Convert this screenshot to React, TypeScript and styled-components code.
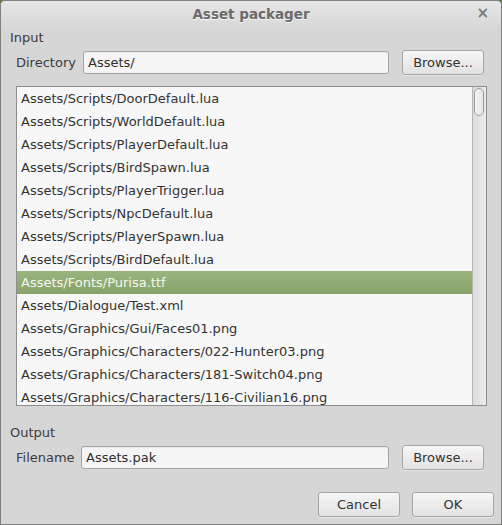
import React from "react";
import styled, { createGlobalStyle } from "styled-components";

const GlobalStyle = createGlobalStyle`
  html, body { margin: 0; padding: 0; background: #5f7a4a; }
  body { font-family: "DejaVu Sans", "Liberation Sans", sans-serif; font-size: 13px; color: #3c3c3c; }
  * { box-sizing: border-box; }
`;

const Window = styled.div`
  width: 502px;
  height: 525px;
  border: 1px solid #7f7f7f;
  border-radius: 5px 5px 0 0;
  background: #d6d6d6;
  display: flex;
  flex-direction: column;
  overflow: hidden;
`;

const TitleBar = styled.div`
  height: 26px;
  flex: none;
  display: flex;
  align-items: center;
  justify-content: center;
  position: relative;
  background: linear-gradient(#e6e6e6, #d8d8d8);
`;

const Title = styled.div`
  font-weight: bold;
  font-size: 13.5px;
  color: #6a6a6a;
  text-shadow: 0 1px 0 #f4f4f4;
`;

const Close = styled.div`
  position: absolute;
  right: 12px;
  top: 4px;
  font-size: 15px;
  font-weight: bold;
  color: #7a7a7a;
  line-height: 17px;
`;

const Body = styled.div`
  flex: 1;
  display: flex;
  flex-direction: column;
  padding: 2px 17px 0 9px;
`;

const SectionLabel = styled.div<{ $top: number }>`
  height: 17px;
  line-height: 17px;
  margin-top: ${(p) => p.$top}px;
  color: #3c3c3c;
`;

const FieldRow = styled.div<{ $top: number }>`
  display: grid;
  grid-template-columns: auto 1fr 82px;
  align-items: center;
  column-gap: 13px;
  height: 25px;
  margin-top: ${(p) => p.$top}px;
  padding-left: 6px;
`;

const FieldLabel = styled.div<{ $w: number }>`
  width: ${(p) => p.$w}px;
  color: #3c3c3c;
`;

const TextBox = styled.div`
  height: 23px;
  border: 1px solid #a4a4a4;
  border-radius: 3px;
  background: #f5f5f5;
  padding: 0 4px;
  line-height: 21px;
  color: #2e2e2e;
  box-shadow: inset 0 1px 1px rgba(0, 0, 0, 0.05);
`;

const Button = styled.div<{ $w?: number }>`
  width: ${(p) => p.$w ?? 82}px;
  height: 25px;
  border: 1px solid #a6a6a6;
  border-radius: 3px;
  background: linear-gradient(#f6f6f6, #e2e2e2);
  display: flex;
  align-items: center;
  justify-content: center;
  color: #333;
  box-shadow: 0 1px 0 rgba(255, 255, 255, 0.4);
`;

const ListBox = styled.div`
  margin-top: 11px;
  margin-left: 6px;
  margin-right: -3px;
  height: 320px;
  border: 1px solid #8e8e8e;
  background: #f7f7f7;
  display: flex;
  overflow: hidden;
`;

const Items = styled.div`
  flex: 1;
  overflow: hidden;
`;

const Item = styled.div<{ $selected?: boolean }>`
  height: 23px;
  line-height: 23px;
  padding-left: 4px;
  white-space: nowrap;
  color: ${(p) => (p.$selected ? "#f4f7ef" : "#333")};
  background: ${(p) => (p.$selected ? "linear-gradient(#9ab47d, #87a36a)" : "transparent")};
`;

const ScrollTrack = styled.div`
  width: 14px;
  flex: none;
  border-left: 1px solid #b5b5b5;
  background: linear-gradient(90deg, #dcdcdc, #ececec);
  padding: 1px 0 0 1px;
`;

const Thumb = styled.div`
  width: 10px;
  height: 28px;
  border: 1px solid #9a9a9a;
  border-radius: 5px;
  background: linear-gradient(90deg, #f4f4f4, #e6e6e6);
`;

const Footer = styled.div`
  display: flex;
  justify-content: flex-end;
  gap: 12px;
  margin-top: 22px;
  margin-right: -10px;
`;

const items = [
  "Assets/Scripts/DoorDefault.lua",
  "Assets/Scripts/WorldDefault.lua",
  "Assets/Scripts/PlayerDefault.lua",
  "Assets/Scripts/BirdSpawn.lua",
  "Assets/Scripts/PlayerTrigger.lua",
  "Assets/Scripts/NpcDefault.lua",
  "Assets/Scripts/PlayerSpawn.lua",
  "Assets/Scripts/BirdDefault.lua",
  "Assets/Fonts/Purisa.ttf",
  "Assets/Dialogue/Test.xml",
  "Assets/Graphics/Gui/Faces01.png",
  "Assets/Graphics/Characters/022-Hunter03.png",
  "Assets/Graphics/Characters/181-Switch04.png",
  "Assets/Graphics/Characters/116-Civilian16.png",
];

export default function App() {
  return (
    <>
      <GlobalStyle />
      <Window>
        <TitleBar>
          <Title>Asset packager</Title>
          <Close>×</Close>
        </TitleBar>
        <Body>
          <SectionLabel $top={0}>Input</SectionLabel>
          <FieldRow $top={4}>
            <FieldLabel $w={54}>Directory</FieldLabel>
            <TextBox>Assets/</TextBox>
            <Button>Browse...</Button>
          </FieldRow>
          <ListBox>
            <Items>
              {items.map((t, i) => (
                <Item key={t} $selected={i === 8}>
                  {t}
                </Item>
              ))}
            </Items>
            <ScrollTrack>
              <Thumb />
            </ScrollTrack>
          </ListBox>
          <SectionLabel $top={18}>Output</SectionLabel>
          <FieldRow $top={4}>
            <FieldLabel $w={52}>Filename</FieldLabel>
            <TextBox>Assets.pak</TextBox>
            <Button>Browse...</Button>
          </FieldRow>
          <Footer>
            <Button>Cancel</Button>
            <Button>OK</Button>
          </Footer>
        </Body>
      </Window>
    </>
  );
}
